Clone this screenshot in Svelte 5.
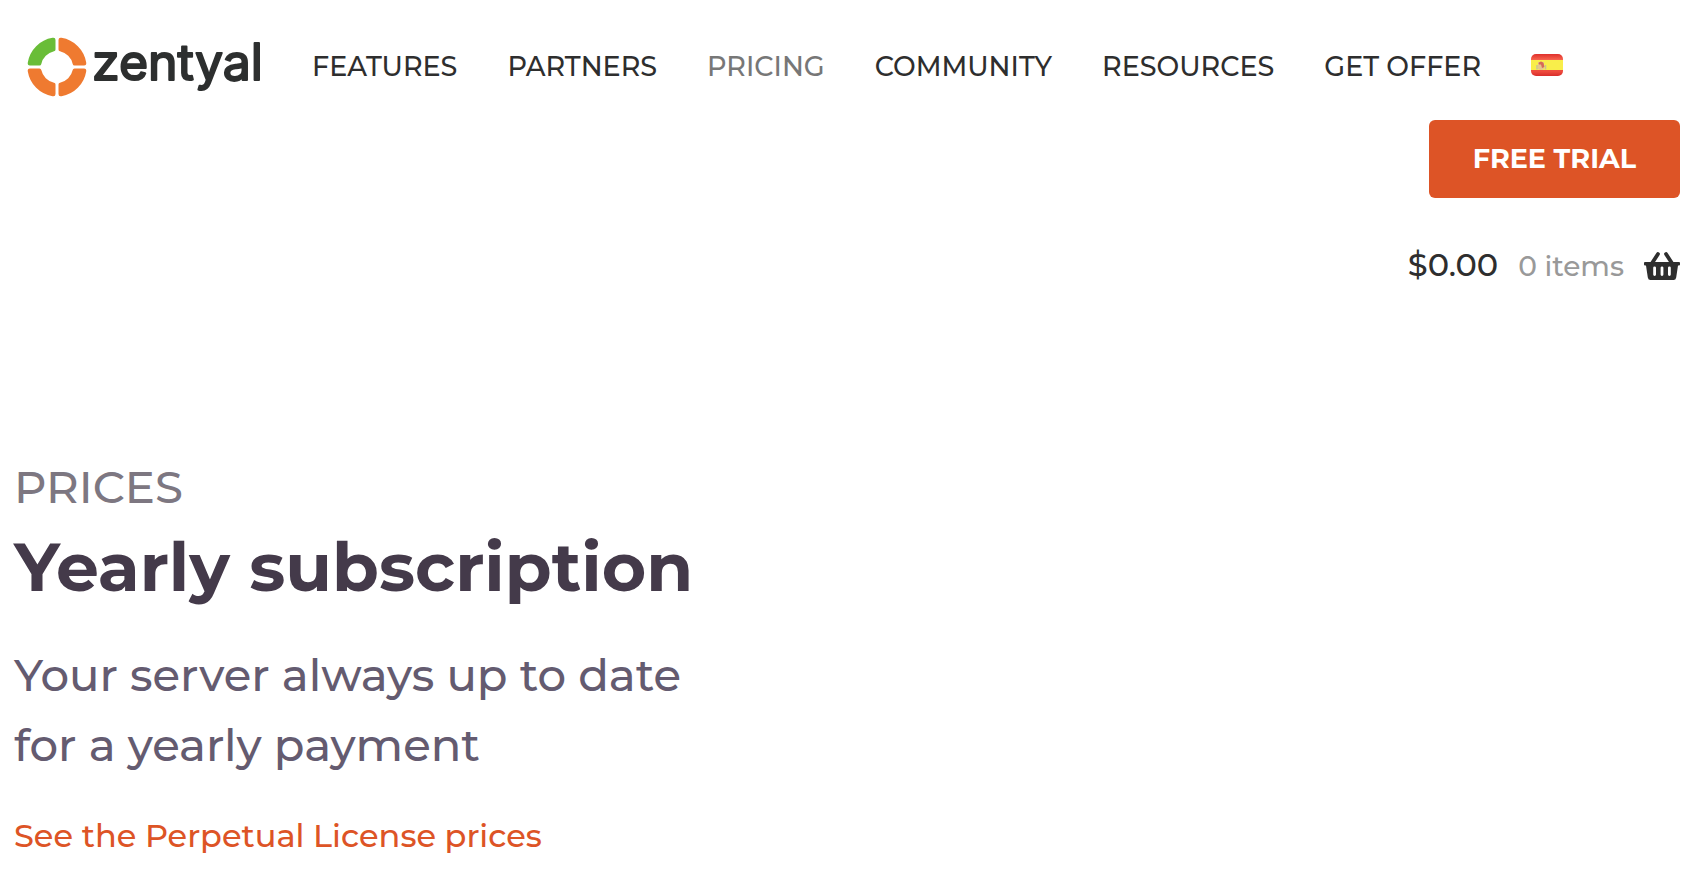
<script lang="ts">
  const links = [
    { label: 'Features', href: '#features' },
    { label: 'Partners', href: '#partners' },
    { label: 'Pricing', href: '#pricing' },
    { label: 'Community', href: '#community' },
    { label: 'Resources', href: '#resources' },
    { label: 'Get offer', href: '#offer' }
  ];

  let current = $state('Pricing');
  let items = $state(0);
  let total = $state(0);
</script>

<header class="site-header">
  <div class="bar">
    <a class="brand" href="#home" aria-label="zentyal">
      <svg class="logo" viewBox="0 -8 235 76">
        <path class="green" d="M28.5 3V12.5Q28.5 14 27 14.3A16.5 16.5 0 0 0 14.3 27Q14 28.5 12.5 28.5H3Q.3 28.5 .8 25.5A30 30 0 0 1 25.5 .8Q28.5 .2 28.5 3Z" />
        <path d="M31.5 3V12.5Q31.5 14 33 14.3A16.5 16.5 0 0 1 45.7 27Q46 28.5 47.5 28.5H57Q59.7 28.5 59.2 25.5A30 30 0 0 0 34.5 .8Q31.5 .2 31.5 3Z" />
        <path d="M31.5 57V47.5Q31.5 46 33 45.7A16.5 16.5 0 0 0 45.7 33Q46 31.5 47.5 31.5H57Q59.7 31.5 59.2 34.5A30 30 0 0 1 34.5 59.2Q31.5 59.8 31.5 57Z" />
        <path d="M28.5 57V47.5Q28.5 46 27 45.7A16.5 16.5 0 0 1 14.3 33Q14 31.5 12.5 31.5H3Q.3 31.5 .8 34.5A30 30 0 0 0 25.5 59.2Q28.5 59.8 28.5 57Z" />
        <text x="65" y="43">zentyal</text>
      </svg>
    </a>
    <nav class="menu" aria-label="Main">
      {#each links as link}
        <a
          href={link.href}
          class:current={current === link.label}
          aria-current={current === link.label ? 'page' : undefined}
          onclick={() => (current = link.label)}
        >{link.label}</a>
      {/each}
      <a class="lang" href="#es" aria-label="Español">
        <svg viewBox="0 0 32 22" aria-hidden="true">
          <defs>
            <clipPath id="flag-shape"><rect width="32" height="22" rx="5" /></clipPath>
            <linearGradient id="flag-red" x2="0" y2="1">
              <stop stop-color="#df302c" />
              <stop offset=".25" stop-color="#f6604b" />
              <stop offset=".8" stop-color="#ed4a3d" />
              <stop offset="1" stop-color="#d92d2b" />
            </linearGradient>
          </defs>
          <g clip-path="url(#flag-shape)">
            <rect width="32" height="22" fill="url(#flag-red)" />
            <rect y="6" width="32" height="10" fill="#f9ee4a" />
            <path d="M7 8H13V15Q10 17 7 15Z" fill="#e6c68c" />
            <path d="M7.5 9Q10 6 12.5 9L13.5 13L11 14L10 10.5H8Z" fill="#d66a58" />
            <path d="M6 11V15.5M14.5 11V15.5" stroke="#c8c198" stroke-width="1.5" />
          </g>
        </svg>
      </a>
    </nav>
  </div>

  <button class="trial" type="button">Free trial</button>

  <a class="cart" href="#cart">
    <span class="amount">${total.toFixed(2)}</span>
    <span class="count">{items} items</span>
    <svg class="basket" viewBox="0 0 36 28" aria-hidden="true">
      <path d="M7.5 12L14 2M28.5 12L22 2" stroke="currentColor" stroke-width="3.8" stroke-linecap="round" />
      <path fill="currentColor" fill-rule="evenodd" d="M1 10H35Q36 10 36 11V12.5Q36 13.5 35 13.5H34L32.2 25.5Q31.8 28 29.5 28H6.5Q4.2 28 3.8 25.5L2 13.5H1Q0 13.5 0 12.5V11Q0 10 1 10ZM9.2 15.8V22.5A1.4 1.4 0 0 0 12 22.5V15.8A1.4 1.4 0 0 0 9.2 15.8ZM16.6 15.8V22.5A1.4 1.4 0 0 0 19.4 22.5V15.8A1.4 1.4 0 0 0 16.6 15.8ZM24 15.8V22.5A1.4 1.4 0 0 0 26.8 22.5V15.8A1.4 1.4 0 0 0 24 15.8Z" />
    </svg>
  </a>
</header>

<main class="intro">
  <p class="eyebrow">Prices</p>
  <h1>Yearly subscription</h1>
  <p class="lead">Your server always up to date<br />for a yearly payment</p>
  <a class="perpetual" href="#perpetual">See the Perpetual License prices</a>
</main>

<style>
  :global(body) {
    margin: 0;
    background: #fff;
    color: #2e2e2e;
    font-family: Montserrat, Inter, sans-serif;
    font-weight: 500;
  }
  a {
    color: inherit;
    text-decoration: none;
  }
  .site-header {
    display: flex;
    flex-direction: column;
    align-items: flex-end;
    padding: 29px 24px 0;
  }
  .bar {
    display: flex;
    align-items: center;
    align-self: stretch;
    gap: 50px;
    padding-left: 3px;
  }
  .brand {
    display: flex;
  }
  .logo {
    width: 235px;
    height: 76px;
    fill: #ef7a30;
  }
  .logo .green {
    fill: #69bd38;
  }
  .logo text {
    fill: #2d2f2f;
    stroke: #2d2f2f;
    stroke-width: 2px;
    stroke-linejoin: round;
    font-family: Inter, sans-serif;
    font-size: 50px;
    font-weight: 400;
  }
  .menu {
    display: flex;
    align-items: center;
    gap: 50px;
    font-size: 27px;
    line-height: 60px;
    text-transform: uppercase;
    white-space: nowrap;
  }
  .current {
    color: #777;
  }
  .lang {
    display: flex;
    padding-bottom: 4px;
  }
  .lang svg {
    width: 32px;
    height: 22px;
  }
  .trial {
    margin-top: 15px;
    padding: 0 44px;
    border: 0;
    border-radius: 6px;
    background: #dd5426;
    color: #fff;
    font: inherit;
    font-size: 27px;
    font-weight: 700;
    line-height: 78px;
    text-transform: uppercase;
    cursor: pointer;
  }
  .cart {
    display: flex;
    align-items: baseline;
    gap: 20px;
    margin-top: 43px;
    line-height: 48px;
  }
  .amount {
    font-size: 32px;
  }
  .count {
    color: #999;
    font-size: 28px;
  }
  .basket {
    align-self: center;
    width: 36px;
    height: 28px;
  }
  .intro {
    padding: 161px 14px 0;
  }
  .eyebrow {
    margin: 0;
    color: #7d7781;
    font-size: 45px;
    line-height: 72px;
    text-transform: uppercase;
  }
  h1 {
    margin: 2px 0 0;
    color: #443a4a;
    font-size: 68px;
    font-weight: 700;
    line-height: 84px;
  }
  .lead {
    margin: 31px 0 0;
    color: #645b70;
    font-size: 45px;
    line-height: 70px;
  }
  .perpetual {
    display: inline-block;
    margin-top: 31px;
    color: #dd5426;
    font-size: 32px;
    line-height: 50px;
  }
</style>
